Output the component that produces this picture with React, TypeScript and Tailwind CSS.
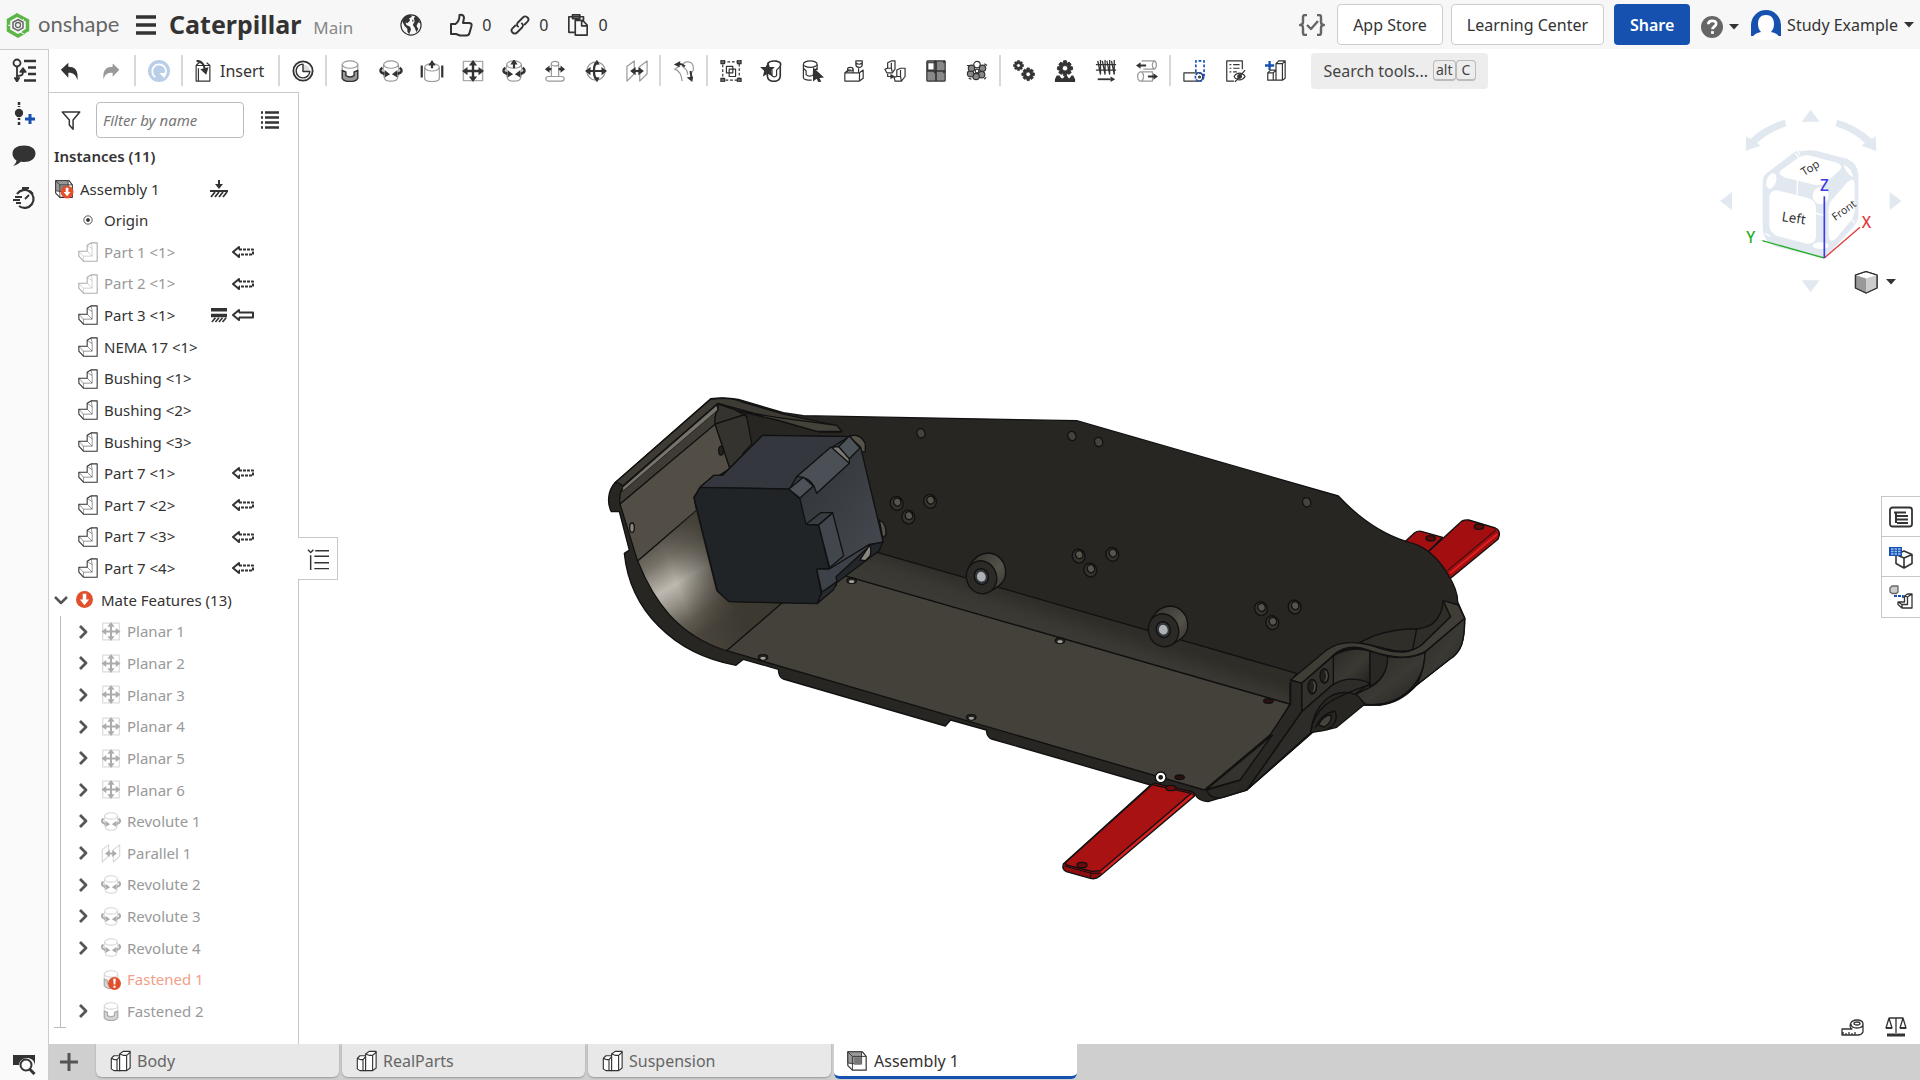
import type { FC, ReactNode } from 'react';

const DARK = '#333';
const GRAY = '#999';

interface IconProps {
    children: ReactNode;
    className?: string;
    box?: string;
}

const Icon: FC<IconProps> = ({ children, className = 'w-6 h-6', box = '0 0 24 24' }) => (
    <svg
        className={`shrink-0 ${className}`}
        viewBox={box}
        fill="none"
        stroke="currentColor"
        strokeWidth="1.3"
        strokeLinejoin="round"
        aria-hidden="true"
    >
        {children}
    </svg>
);

/* ---------- mate icons, shared by toolbar and tree ---------- */

const FastenedGlyph = () => (
    <>
        <path d="M3.500 5v7M20.500 5v7" stroke={GRAY} />
        <path d="M3.500 11.500V20c1 2 4 3.500 8.500 3.500s7.500-1.500 8.500-3.500v-8.500l-4 1.500v4c-2 2-7 2-9 0v-4z" fill={GRAY} stroke={DARK} strokeWidth="1.600" />
        <ellipse cx="12" cy="5" rx="8.500" ry="4" fill="#fff" stroke={GRAY} />
    </>
);

const RevoluteGlyph = () => (
    <>
        <path d="M4 5c-1 5-1 10 1 15 1 4 13 4 14 0 2-5 2-10 1-15" stroke={GRAY} />
        <ellipse cx="12" cy="5" rx="8" ry="4" stroke={GRAY} />
        <path d="M2.500 8.500C-.5 10.500-.5 14 5 15M21.500 8.500C24.500 10.500 24.500 14 19 15" stroke={DARK} strokeWidth="2.600" />
        <path d="M5 11l6 4.500L5 19zM19 11l-6 4.500L19 19z" fill={DARK} stroke="none" />
    </>
);

const PlanarGlyph = () => (
    <>
        <rect x="1.500" y="1.500" width="21" height="21" stroke="#aaa" strokeWidth="1.600" />
        <path d="M12 3v18M3 12h18" stroke={DARK} strokeWidth="2.600" />
        <path d="M12 0l4.500 6h-9zM12 24l4.500-6h-9zM0 12l6-4.500v9zM24 12l-6-4.500v9z" fill={DARK} stroke="none" />
    </>
);

const ParallelGlyph = () => (
    <>
        <path d="M1 23V7l8-6v14zM23 1v14l-8 8V7z" stroke={GRAY} />
        <path d="M7 12h10" stroke={DARK} strokeWidth="2.400" />
        <path d="M4.500 12l6-4.500v9zM19.500 12l-6-4.500v9z" fill={DARK} stroke="none" />
    </>
);

const PartGlyph = () => (
    <>
        <path d="M1 11h10V4l5-3h7v22H6.500L1 17z" fill="#fff" />
        <path d="M1 11l5.500 6H17L11 11M11 4l6 4v9M6.500 17v6M17 8l-1-7" strokeWidth="1" opacity=".6" />
    </>
);

const StudioGlyph = () => (
    <>
        <path d="M1.500 9l3-3h6.500v17H4.500l-3-2z" fill="#fff" />
        <path d="M1.500 9l4 1.500H8V23M8 10.500L11 7" />
        <path d="M11 4l4-3h8v19l-4 3h-8z" fill="#fff" />
        <path d="M11 4l4 1.500h4V23M19 5.500L23 2" />
    </>
);

const AssemblyGlyph = () => (
    <>
        <path d="M2 2h16l4 5v15H7l-5-5z" fill="#fff" />
        <path d="M2 2h15v13H7l-5-1z" fill={GRAY} strokeWidth="1" />
        <path d="M7 22V7h15M2 2l5 5" strokeWidth="1" />
        <path d="M9 8h8v8H9z" fill="#777" stroke="none" />
    </>
);

const ErrorArrow = () => (
    <>
        <circle cx="12" cy="12" r="12" fill="#e0502a" stroke="none" />
        <path d="M9.500 4h5v8h4L12 20l-6.500-8h4z" fill="#fff" stroke="none" />
    </>
);

/* ---------- header ---------- */

const Caret = () => (
    <svg className="w-2.5 h-1.5 shrink-0" viewBox="0 0 10 6" aria-hidden="true">
        <path d="M0 0h10L5 5.500z" fill="#333" />
    </svg>
);

const Counter: FC<{ label: string; children: ReactNode }> = ({ label, children }) => (
    <button aria-label={label} className="flex items-center gap-[9px]">
        {children}
        <span>0</span>
    </button>
);

const Header = () => (
    <header className="flex h-[49px] shrink-0 items-center bg-[#f7f7f7] pl-1.5 pr-1.5 text-base text-[#333]">
        <a href="#" className="flex items-center gap-2 text-[#666]">
            <svg className="h-[26px] w-6" viewBox="0 0 24 26" fill="none" aria-hidden="true">
                <path d="M12 2.500L2.500 8v7" stroke="#5cb647" strokeWidth="3.500" />
                <path d="M2.500 14v4.500L12 24l6-3.500" stroke="#5cb647" strokeWidth="3.500" />
                <path d="M10 2.500l11.500 6V18L17 20.500" stroke="#5cb647" strokeWidth="3.500" />
                <path d="M2 13l5 2M14 20l4 2M18 7l-3 3" stroke="#f7f7f7" strokeWidth="1" />
                <path d="M12 7.500l5 2.800v5.500l-5 2.800-5-2.800v-5.500z" stroke="#666" strokeWidth="1.500" />
                <circle cx="12" cy="13" r="2.500" stroke="#666" strokeWidth="1.300" />
            </svg>
            <span className="w-[84px] pb-0.5 font-[Lato] text-[22px] leading-6">onshape</span>
        </a>
        <button aria-label="Menu" className="ml-3.5">
            <Icon className="h-5 w-5" box="0 0 20 20">
                <path d="M0 2h20M0 10h20M0 18h20" strokeWidth="3.500" />
            </Icon>
        </button>
        <div className="ml-[13px] flex items-baseline gap-3">
            <h1 className="text-[25px] font-bold">Caterpillar</h1>
            <span className="text-[17px] text-[#888]">Main</span>
        </div>
        <button aria-label="Public document" className="ml-[47px]">
            <Icon className="h-[22px] w-[22px]">
                <circle cx="12" cy="12" r="11" />
                <path d="M4 4c3-3 6-3.500 8-3l1 2-3 2 1 2-3 3-2-1 1 3 4 2 1 3-2 5-2-3v-3l-3-3-3-6zM17 2l4 4 1 4-2-1-2 4 2 3-2 4-2-5-2-3 2-4-1-3zM13 6l2 1-1 2z" fill={DARK} stroke="none" />
            </Icon>
        </button>
        <div className="ml-[27px] flex items-center gap-[19px]">
            <Counter label="Likes">
                <Icon>
                    <path d="M2 11h4.500c3-2 4-5 4-9 3-1 4.500 1 4.500 3l-1 5h6c2 0 3 1 2.500 3l-2 7c-.5 2-2 2.500-3 2.500H11L7 21H2z" strokeWidth="2" />
                </Icon>
            </Counter>
            <Counter label="Links">
                <Icon className="h-5 w-5">
                    <path d="M10.500 14.500c-2.500-1.500-2.500-4-1-5.500l6-6c2-2 4-1.500 5.500 0s1.500 3.500 0 5L17 12M13.500 9.500c2.500 1.500 2.500 4 1 5.500l-6 6c-2 2-4 1.500-5.500 0s-1.500-3.500 0-5L7 12" strokeWidth="2.200" />
                </Icon>
            </Counter>
            <Counter label="Copies">
                <Icon className="h-[22px] w-[22px]">
                    <path d="M8 20H2V3h16v4M6 3V1h8v4H6zM9 7h8l5 5v11H9zM16 7v6h6" strokeWidth="1.800" />
                </Icon>
            </Counter>
        </div>
        <div className="ml-auto flex items-center">
            <button aria-label="Versions check" className="mr-3 text-[#666]">
                <Icon className="h-[22px] w-[26px]" box="0 0 26 22">
                    <path d="M8 1H6Q4 1 4 3v5q0 3-3 3 3 0 3 3v5q0 2 2 2h2M18 1h2q2 0 2 2v5q0 3 3 3-3 0-3 3v5q0 2-2 2h-2M8 11l4 4 7-8" strokeWidth="2.400" />
                </Icon>
            </button>
            <button className="h-[41px] rounded-sm border border-[#ccc] bg-white px-[15px]">App Store</button>
            <button className="ml-2 h-[41px] rounded-sm border border-[#ccc] bg-white px-[15px]">Learning Center</button>
            <button className="ml-2.5 h-[41px] w-[76px] rounded-sm bg-[#1651b0] font-semibold text-white">Share</button>
            <button aria-label="Help" className="ml-[11px] flex items-center gap-1.5 pt-1">
                <svg className="h-[22px] w-[22px]" viewBox="0 0 24 24" fill="none" aria-hidden="true">
                    <circle cx="12" cy="12" r="12" fill="#666" />
                    <path d="M8 9c0-5 8.500-5 8.500-.500 0 3-4 3-4 6" stroke="#fff" strokeWidth="3" />
                    <rect x="11" y="16.500" width="3" height="3" fill="#fff" />
                </svg>
                <Caret />
            </button>
            <button className="ml-3 flex items-center">
                <svg className="mr-1.5 h-[30px] w-[30px]" viewBox="0 0 30 30" aria-hidden="true">
                    <path d="M0 26V15a15 15 0 0130 0v11z" fill="#1651b0" />
                    <path d="M15 5c5 0 8 3 8 9 0 3-1 6-3 8 4 1 7 2 8 5-2 2-8 3-13 3S4 29 2 27c1-3 4-4 8-5-2-2-3-5-3-8 0-6 3-9 8-9z" fill="#fff" />
                </svg>
                <span className="mr-1.5">Study Example</span>
                <Caret />
            </button>
        </div>
    </header>
);

/* ---------- left rail ---------- */

const Rail = () => (
    <nav className="flex w-[49px] shrink-0 flex-col items-center border-r border-t border-[#ccc] bg-[#fafafa] text-[#333]">
        <button aria-label="Versions and history" className="mt-2">
            <Icon>
                <circle cx="5" cy="5" r="3.500" strokeWidth="1.800" />
                <path d="M5 9v13M5 18c6 0 6-2 6-5" strokeWidth="1.800" />
                <path d="M5 24l-2.500-4h5zM11 10l-3 4h6z" fill={DARK} />
                <path d="M12 3h12M16 9.500h8M16 16h8M12 22.500h12" strokeWidth="2.500" />
            </Icon>
        </button>
        <button aria-label="Create version" className="mt-5">
            <Icon>
                <path d="M7 0v3M7 4v1M7 16v2M7 20v3" strokeWidth="2.500" />
                <circle cx="7" cy="11" r="3.500" fill={DARK} />
                <path d="M18 12v10M13 17h10" stroke="#1651b0" strokeWidth="3" />
            </Icon>
        </button>
        <button aria-label="Comments" className="mt-[18px]">
            <Icon>
                <path d="M12 1.500c7 0 11.500 3 11.500 8s-5 8.500-11.500 8.500c-1 0-2 0-3-.5-2 2-5 4-8 4.500 2-2 3-3 3.500-5.500C2 15 .5 12.500.5 9.500c0-5 4.500-8 11.500-8z" fill={DARK} stroke="none" />
            </Icon>
        </button>
        <button aria-label="Performance" className="mt-[18px]">
            <Icon>
                <path d="M5 8a9 9 0 112 12" strokeWidth="2.200" />
                <path d="M10 2h7M13.500 2v3M18 5l3 3M13 13l4-4M3 11h7M1 14h7M4 17h5" strokeWidth="1.800" />
            </Icon>
        </button>
        <button aria-label="Search document" className="mb-[5px] mt-auto">
            <Icon>
                <path d="M1 4h22v10c-1-5-4-7-8-7s-8 3-8 7H1z" fill={DARK} stroke="none" />
                <circle cx="14" cy="14" r="5.500" strokeWidth="2" />
                <path d="M17.500 18l5 5" strokeWidth="3" />
            </Icon>
        </button>
    </nav>
);

/* ---------- toolbar ---------- */

const Sep = () => <span className="mx-0.5 h-[31px] w-0.5 shrink-0 bg-[#d8d8d8]" />;

const Tool: FC<{ label: string; children: ReactNode }> = ({ label, children }) => (
    <button aria-label={label} className="flex w-[41px] shrink-0 justify-center">
        <Icon className="h-[22px] w-6">{children}</Icon>
    </button>
);

const GEAR = 'M10 1h4l1 4 3-2 3 3-2 3 4 1v4l-4 1 2 3-3 3-3-2-1 4h-4l-1-4-3 2-3-3 2-3-4-1v-4l4-1-2-3 3-3 3 2zM12 8a4 4 0 100 8 4 4 0 000-8z';

const Toolbar = () => (
    <div role="toolbar" className="flex h-[43px] shrink-0 items-center text-base text-[#333]">
        <button aria-label="Undo" className="flex w-[41px] shrink-0 justify-center">
            <Icon className="h-5 w-5">
                <path d="M10 2v5c9 0 12 5 11 16-2-6-4-9-11-9v6L1 10.500z" fill={DARK} stroke="none" />
            </Icon>
        </button>
        <button aria-label="Redo" className="flex w-[42px] shrink-0 justify-center">
            <Icon className="h-5 w-5">
                <path d="M14 3v4C5 7 2 12 3 22c2-6 4-8 11-8v5l8-8.500z" fill={GRAY} stroke="none" />
            </Icon>
        </button>
        <Sep />
        <Tool label="Update">
            <circle cx="12" cy="12" r="12" fill="#b9cee8" stroke="none" />
            <path d="M8 18.500A7.500 7.500 0 1117 18" stroke="#fff" strokeWidth="2" />
            <path d="M12.500 14.500l7-.500-1.500 6z" fill="#fff" stroke="none" />
        </Tool>
        <Sep />
        <button className="flex shrink-0 items-center gap-2 pl-[9px] pr-3">
            <Icon className="h-[22px] w-[18px]" box="0 0 18 24">
                <path d="M1.500 6h15v17H1.500zM1.500 6l3-3h4M16.500 6L13 3M4 9v14" />
                <path d="M2 1c5 0 8 3 9 9" strokeWidth="2.200" />
                <path d="M6 10l9-2-2.500 8z" fill={DARK} stroke="none" />
            </Icon>
            Insert
        </button>
        <Sep />
        <Tool label="Animate">
            <circle cx="12" cy="12" r="10.500" strokeWidth="2" />
            <path d="M13 5v7h6.500c-.5-4-2.500-6.500-6.500-7z" fill="#ddd" stroke="none" />
            <path d="M12 4.500a7.500 7.500 0 107.500 8H12z" strokeWidth="1.600" />
        </Tool>
        <Sep />
        <Tool label="Fastened mate"><FastenedGlyph /></Tool>
        <Tool label="Revolute mate"><RevoluteGlyph /></Tool>
        <Tool label="Slider mate">
            <path d="M4 8v12c0 2 3 3.500 8 3.500s8-1.500 8-3.500V8" stroke={GRAY} />
            <ellipse cx="12" cy="8" rx="8" ry="4" stroke={GRAY} />
            <path d="M.8 6v13M23.200 6v13M12 3v6" stroke={DARK} strokeWidth="2.400" />
            <path d="M12 0l4 6H8z" fill={DARK} stroke="none" />
        </Tool>
        <Tool label="Planar mate"><PlanarGlyph /></Tool>
        <Tool label="Cylindrical mate">
            <RevoluteGlyph />
            <path d="M12 3v6" strokeWidth="2.400" />
            <path d="M12-1l4 6H8z" fill={DARK} stroke="none" />
        </Tool>
        <Tool label="Pin slot mate">
            <ellipse cx="12" cy="4" rx="4" ry="2.500" stroke={GRAY} />
            <path d="M8 4v14M16 4v14M5 18h14c4 0 4 5 0 5H5c-4 0-4-5 0-5z" stroke={GRAY} />
            <path d="M3 10h5M16 10h5" strokeWidth="2.400" />
            <path d="M1 10l5-4v8zM23 10l-5-4v8z" fill={DARK} stroke="none" />
        </Tool>
        <Tool label="Ball mate">
            <circle cx="12" cy="12" r="10" stroke={GRAY} />
            <path d="M12 3c-3 4-3 14 0 18M3 12h18" strokeWidth="2.400" />
            <path d="M13-.500l3 5.500-6 .500zM13 24.500l3-5.500-6-.500zM0 12l6-4.500v9zM24 12l-6-4.500v9z" fill={DARK} stroke="none" />
        </Tool>
        <Tool label="Parallel mate"><ParallelGlyph /></Tool>
        <Sep />
        <Tool label="Tangent mate">
            <path d="M10 7c2-7 11-6 12 0 1 4-1 7-4 8M8 6L2 10c3 1 7 4 8 13M10 7c4 2 6 5 6 9" stroke={GRAY} />
            <path d="M6 4c3 0 5 1 7 3M19 12c1 3 1 5 1 8" strokeWidth="2.200" />
            <path d="M1 5l7-4-1 7zM21 24l-6-5 7-1z" fill={DARK} stroke="none" />
        </Tool>
        <Sep />
        <Tool label="Group">
            <path d="M3 2h18v20H3z" strokeDasharray="3 2" />
            <path d="M7 7h7v7H7zM10 10h7v8h-7z" />
            <path d="M1 0h4v4H1zM19 0h4v4h-4zM1 20h4v4H1zM19 20h4v4h-4z" fill="#666" stroke={DARK} />
        </Tool>
        <Tool label="Mate connector">
            <path d="M7 8v10c1 7 13 7 14 0V6M21 6c3-5-10-7-14-2" strokeWidth="1.800" />
            <path d="M12 11v6c1 2 4 2 5 0v-6l4-4" />
            <path d="M8 2l1.500 5.500H15L11 12l1.500 6L7.500 15 2 18l1.500-6L-1 7.500h6z" fill={DARK} stroke="none" />
        </Tool>
        <Tool label="Select part">
            <ellipse cx="9" cy="4.500" rx="7.500" ry="3.500" />
            <path d="M1.500 5v14c0 2 4 3 9 3M16.500 5v6M1.500 9l3 3v4c2 2 6 2 8 0v-4l4-3" />
            <path d="M12 8l12 11-5 .500 2 4-3 1-2-4-4 3z" fill={DARK} stroke="none" />
        </Tool>
        <Tool label="Replicate">
            <path d="M2 14h16l4-3v9l-4 3H2zM2 14l4-3h3M18 14v9" />
            <ellipse cx="8" cy="10" rx="3" ry="2" />
            <path d="M5 10v3M11 10v4M17 9v5M14 1h7v4c0 4-7 4-7 0zM14 3c2 2 5 2 7 0" />
        </Tool>
        <Tool label="Copy parts">
            <path d="M1 10l3-1V3l4-2h4v9l-3 4H3zM11 19l3-1v-7l4-2h5v9l-4 5h-7z" fill="#fff" />
            <path d="M4 9h4V3M8 9l1 4M14 18h4v-7M18 18l1 5M4 15v3h5" />
            <path d="M7 15l5 3-5 3z" fill={DARK} stroke="none" />
        </Tool>
        <Tool label="Linear pattern">
            <rect x="2" y="1" width="20" height="22" rx="1" fill="#888" />
            <path d="M3 3h7v8H3z" fill="#fff" />
            <path d="M12 1v22M2 12h20M10 3l2-2M10 14l2-2M20 3l2-2M20 14l2-2" strokeWidth="1.800" />
        </Tool>
        <Tool label="Circular pattern">
            <g fill="#888">
                <circle cx="12" cy="5" r="3.500" fill="#fff" />
                <circle cx="18" cy="9" r="3.500" />
                <circle cx="17" cy="16" r="3.500" />
                <circle cx="11" cy="18" r="3.500" />
                <circle cx="5" cy="15" r="3.500" />
                <circle cx="6" cy="9" r="3.500" />
            </g>
            <circle cx="12" cy="12" r="2" />
            <path d="M1 6h3M20 4l3 2M20 21l2-2M3 20l3 1" />
        </Tool>
        <Sep />
        <Tool label="Gear relation">
            <path d={GEAR} fill={DARK} fillRule="evenodd" stroke={DARK} transform="translate(0 0) scale(.5)" />
            <path d={GEAR} fill={DARK} fillRule="evenodd" stroke={DARK} transform="translate(9 8) scale(.63)" />
        </Tool>
        <Tool label="Rack and pinion relation">
            <path d={GEAR} fill={DARK} fillRule="evenodd" stroke={DARK} transform="translate(3 0) scale(.75)" />
            <path d="M1 24v-3l2-4h3l2 3h2l2-3h2l2 3h1l2-3h2l2 4v3z" fill={DARK} stroke="none" />
        </Tool>
        <Tool label="Screw relation">
            <path d="M3 1l3 15M8 1l3 15M13 1l3 15M18 1l3 15M6 0v15M11 0v15M16 0v15M21 0v15M1 5h22M1 11h22" strokeWidth="1.400" />
            <path d="M3 21h14" strokeWidth="2" />
            <path d="M22 21l-5-3v6z" fill={DARK} stroke="none" />
        </Tool>
        <Tool label="Linear relation">
            <path d="M6 1h14c3 1 3 8 0 9H8M20 1c-3 2-3 7 0 9M4 13h14v10H4c-3-2-3-8 0-10M6 13c3 2 3 8 0 10" stroke={GRAY} />
            <path d="M3 6h8M13 18h8" strokeWidth="2" />
            <path d="M0 6l5-3.500v7zM24 18l-5-3.500v7z" fill={DARK} stroke="none" />
        </Tool>
        <Sep />
        <Tool label="Section in context">
            <path d="M14 13V1h9v18" stroke="#1651b0" strokeDasharray="3 2" strokeWidth="1.800" />
            <path d="M1 14h16c6 0 6 9 0 9H1z" />
            <circle cx="18" cy="18.500" r="4.500" stroke="#1651b0" strokeDasharray="3 1" strokeWidth="1.800" />
            <circle cx="18" cy="18.500" r="1" />
        </Tool>
        <Tool label="Configurations">
            <path d="M20 10V1H3v22h8" />
            <path d="M6 5h2M10 5h7M6 9h2M10 9h7M6 13h2M10 13h4" />
            <path d="M11 18c3-5 9-5 12 0-3 5-9 5-12 0zM23 11L12 24" />
            <circle cx="17" cy="18" r="2" fill={DARK} />
        </Tool>
        <Tool label="Create part studio in context">
            <path d="M3 14l3-3h6v11H3zM3 14h6v8M9 14l3-3M12 4l3-3h7v19l-3 2h-7zM12 4h7v18M19 4l3-3" />
            <path d="M5 1v10M0 6h10" stroke="#1651b0" strokeWidth="2.500" />
        </Tool>
        <button className="ml-[15px] flex h-9 shrink-0 items-center rounded-sm bg-[#ededed] px-3 text-[#444]">
            <span className="mr-[5px]">Search tools...</span>
            <kbd className="rounded-sm border border-b-2 border-[#bbb] px-0.5 font-[inherit] text-sm leading-[18px]">alt</kbd>
            <kbd className="rounded-sm border border-b-2 border-[#bbb] px-[5px] font-[inherit] text-sm leading-[18px]">C</kbd>
        </button>
    </div>
);

/* ---------- feature tree ---------- */

type Freedom = 'dashed' | 'solid';

interface Part {
    name: string;
    hidden?: boolean;
    freedom?: Freedom;
}

const parts: Part[] = [
    { name: 'Part 1 <1>', hidden: true, freedom: 'dashed' },
    { name: 'Part 2 <1>', hidden: true, freedom: 'dashed' },
    { name: 'Part 3 <1>', freedom: 'solid' },
    { name: 'NEMA 17 <1>' },
    { name: 'Bushing <1>' },
    { name: 'Bushing <2>' },
    { name: 'Bushing <3>' },
    { name: 'Part 7 <1>', freedom: 'dashed' },
    { name: 'Part 7 <2>', freedom: 'dashed' },
    { name: 'Part 7 <3>', freedom: 'dashed' },
    { name: 'Part 7 <4>', freedom: 'dashed' },
];

const mates = [
    'Planar 1', 'Planar 2', 'Planar 3', 'Planar 4', 'Planar 5', 'Planar 6',
    'Revolute 1', 'Parallel 1', 'Revolute 2', 'Revolute 3', 'Revolute 4',
    'Fastened 1', 'Fastened 2',
];

const MateGlyph: FC<{ name: string }> = ({ name }) => {
    if (name.startsWith('Planar')) return <PlanarGlyph />;
    if (name.startsWith('Revolute')) return <RevoluteGlyph />;
    if (name.startsWith('Parallel')) return <ParallelGlyph />;
    return <FastenedGlyph />;
};

const FreedomArrow: FC<{ kind: Freedom }> = ({ kind }) => (
    <Icon className="h-3 w-[22px]" box="0 0 22 12">
        <path d="M7 3.500V1L1 6l6 5V8.500" strokeWidth="2" />
        <path d="M7 3.500h14v5H7" strokeWidth="2" strokeDasharray={kind === 'dashed' ? '3 1' : undefined} />
    </Icon>
);

const Hatch = () => <path d="M1 17l4-5M5 17l4-5M9 17l4-5M13 17l4-5" strokeWidth="1.800" />;

const FeatureTree = () => (
    <aside className="relative flex w-[250px] shrink-0 flex-col border-r border-t border-[#c8c8c8] bg-white text-[15px] text-[#333]">
        <div className="flex shrink-0 items-center pl-3 pt-[9px]">
            <Icon className="h-5 w-5">
                <path d="M1.500 2.500h21L14.500 12v11L10 18v-6z" strokeWidth="1.800" />
            </Icon>
            <input
                type="text"
                aria-label="Filter by name"
                placeholder="Filter by name"
                className="ml-[15px] h-9 w-[148px] rounded-sm border border-[#bbb] px-1.5 italic placeholder:text-[#777]"
            />
            <button aria-label="List options" className="ml-[17px]">
                <Icon className="h-[18px] w-[18px]" box="0 0 18 18">
                    <path d="M0 1.500h2M4 1.500h14M0 6.500h2M4 6.500h14M0 11.500h2M4 11.500h14M0 16.500h2M4 16.500h14" strokeWidth="2.400" />
                </Icon>
            </button>
        </div>
        <h2 className="mt-[7px] h-7 shrink-0 pl-[5px] font-semibold">Instances (11)</h2>
        <ul className="relative grid min-h-0 flex-1 auto-rows-fr">
            <li className="flex items-center pl-[5px]">
                <Icon className="h-5 w-5">
                    <AssemblyGlyph />
                    <g transform="translate(8 8) scale(.64)"><ErrorArrow /></g>
                </Icon>
                <span className="ml-1.5">Assembly 1</span>
                <Icon className="ml-[50px] h-[18px] w-[18px]" box="0 0 18 18">
                    <path d="M9 0v5M0 11h18" strokeWidth="2" />
                    <path d="M9 9L5 4h8z" fill={DARK} stroke="none" />
                    <Hatch />
                </Icon>
            </li>
            <li className="flex items-center pl-[34px]">
                <Icon className="h-2.5 w-2.5">
                    <circle cx="12" cy="12" r="10" strokeWidth="2" />
                    <circle cx="12" cy="12" r="4" fill={DARK} />
                </Icon>
                <span className="ml-[11px]">Origin</span>
            </li>
            {parts.map((part) => (
                <li key={part.name} className="flex items-center pl-[29px] pr-11">
                    <Icon className={part.hidden ? 'h-5 w-5 opacity-40' : 'h-5 w-5'}><PartGlyph /></Icon>
                    <span className={part.hidden ? 'ml-1.5 mr-auto text-[#999]' : 'ml-1.5 mr-auto'}>{part.name}</span>
                    {part.freedom === 'solid' && (
                        <Icon className="mr-[5px] h-4 w-4" box="0 0 18 18">
                            <path d="M0 3h18M0 9.500h18" strokeWidth="4" />
                            <Hatch />
                        </Icon>
                    )}
                    {part.freedom && <FreedomArrow kind={part.freedom} />}
                </li>
            ))}
            <li className="flex items-center pl-[5px]">
                <button aria-label="Collapse mate features">
                    <Icon className="h-3.5 w-3.5" box="0 0 14 14">
                        <path d="M1 4l6 6 6-6" stroke="#555" strokeWidth="2.500" />
                    </Icon>
                </button>
                <Icon className="ml-2 h-[17px] w-[17px]"><ErrorArrow /></Icon>
                <span className="ml-2">Mate Features (13)</span>
            </li>
            {mates.map((name) => {
                const broken = name === 'Fastened 1';
                return (
                    <li key={name} className="ml-[11px] flex items-center border-l border-[#bbb] pl-4">
                        <button aria-label={`Expand ${name}`} className={broken ? 'invisible' : ''}>
                            <Icon className="h-3.5 w-3" box="0 0 12 14">
                                <path d="M3 1l6 6-6 6" stroke="#555" strokeWidth="2.800" />
                            </Icon>
                        </button>
                        <span className="relative ml-3 flex">
                            <Icon className="h-[19px] w-5 opacity-40"><MateGlyph name={name} /></Icon>
                            {broken && (
                                <span className="absolute -bottom-px right-0">
                                    <Icon className="h-[13px] w-[13px]">
                                        <circle cx="12" cy="12" r="12" fill="#e0502a" stroke="none" />
                                        <path d="M9.500 3h5l-1 11h-3zM10 16h4v4h-4z" fill="#fff" stroke="none" />
                                    </Icon>
                                </span>
                            )}
                        </span>
                        <span className={broken ? 'ml-1.5 text-[#f2a08a]' : 'ml-1.5 text-[#999]'}>{name}</span>
                    </li>
                );
            })}
        </ul>
        <div className="mb-4 ml-[5px] w-3 shrink-0 border-t border-[#bbb]" />
        <button
            aria-label="Toggle tree panel"
            className="absolute left-full top-[444px] z-10 flex h-[43px] w-10 items-center justify-center border border-l-0 border-[#c8c8c8] bg-white"
        >
            <Icon className="h-[22px] w-[22px]">
                <path d="M1 2l3 3 3-3M9 3h15M4 8v16M8 9h16M8 16h16M8 22.500h16" strokeWidth="1.600" />
            </Icon>
        </button>
    </aside>
);

/* ---------- 3D viewport ---------- */

const smallHoles = [
    [993, 160], [1446, 168], [1526, 186], [2150, 367],
];

const screwHoles = [
    [920, 370], [955, 411], [1020, 364],
    [1466, 528], [1501, 570], [1567, 523],
    [2013, 686], [2047, 728], [2114, 681],
];

const floorHoles = [
    [519, 832], [785, 602], [1144, 1012], [1410, 782],
];

const Bushing: FC<{ x: number; y: number }> = ({ x, y }) => (
    <g transform={`translate(${x} ${y})`}>
        <path d="M-36-32Q-15-70 20-71C50-70 75-45 73-8 70 20 50 30 30 42z" fill="url(#bushing)" />
        <ellipse cx="0" cy="2" rx="45" ry="50" fill="#2b2a27" transform="rotate(-20)" />
        <ellipse rx="21" ry="24" fill="#33373d" transform="rotate(-20)" />
        <ellipse rx="13" ry="15" fill="#b0b1b3" stroke="none" transform="rotate(-20)" />
    </g>
);

const Model = () => (
    <svg className="block h-full w-full" viewBox="299 92 1621 952" role="img" aria-label="Caterpillar assembly">
        <defs>
            <linearGradient id="curve" gradientUnits="userSpaceOnUse" x1="180" y1="490" x2="340" y2="760">
                <stop offset="0" stopColor="#56524a" />
                <stop offset=".2" stopColor="#777268" />
                <stop offset=".46" stopColor="#bdb9b0" />
                <stop offset=".62" stopColor="#99948a" />
                <stop offset=".82" stopColor="#645f55" />
                <stop offset="1" stopColor="#4a463d" />
            </linearGradient>
            <linearGradient id="curveShade" gradientUnits="userSpaceOnUse" x1="265" y1="620" x2="400" y2="570">
                <stop offset="0" stopColor="#3a372f" stopOpacity="0" />
                <stop offset="1" stopColor="#3a372f" stopOpacity=".85" />
            </linearGradient>
            <linearGradient id="side" gradientUnits="userSpaceOnUse" x1="640" y1="300" x2="860" y2="450">
                <stop offset="0" stopColor="#32373c" />
                <stop offset="1" stopColor="#42464c" />
            </linearGradient>
            <linearGradient id="band" gradientUnits="userSpaceOnUse" x1="1400" y1="680" x2="1370" y2="770">
                <stop offset="0" stopColor="#2e2d28" />
                <stop offset=".6" stopColor="#3a3832" />
                <stop offset="1" stopColor="#3b3a34" />
            </linearGradient>
            <linearGradient id="bushing" x1="0" y1="0" x2="1" y2="1">
                <stop offset="0" stopColor="#33312c" />
                <stop offset=".6" stopColor="#55524a" />
                <stop offset="1" stopColor="#33312c" />
            </linearGradient>
            <linearGradient id="fender" x1="0" y1="0" x2="1" y2="1">
                <stop offset="0" stopColor="#2b2a26" />
                <stop offset=".55" stopColor="#3b3933" />
                <stop offset="1" stopColor="#22211e" />
            </linearGradient>
        </defs>
        {/* drawn at 3x, shapes are in model-local units */}
        <g transform="translate(590 380) scale(.33333)" stroke="#111" strokeWidth="4" strokeLinejoin="round">
            {/* rear links */}
            <path d="M2440 490l34-32q8-6 20-4l64 18-50 50z" fill="#a30f10" />
            <path d="M2512 518l98-90q8-10 26-8l80 24q14 6 12 22l-4 12-144 118z" fill="#a30f10" />
            <path d="M2580 580l142-118" fill="none" stroke="#dd2020" strokeWidth="6" />
            <path d="M2572 572l146-122" fill="none" strokeWidth="3" />
            <ellipse cx="2522" cy="475" rx="14" ry="8" fill="#5c0a0a" />
            <ellipse cx="2667" cy="440" rx="14" ry="8" fill="#5c0a0a" />

            {/* body silhouette */}
            <path
                d="M362 56Q405 50 445 58L580 98l60 9 820 15 785 226Q2340 450 2450 485q75 15 125 100 28 45 28 80l21 48q0 80-44 122l-100 80q-50 55-110 60h-70l-60 55q-20 22-65 20L1970 1230l-116 35q-28-2-38-20l-10-10-124-20-477-138q-14-4-16-27l-107-30-16 18-486-141q-14-3-15-29l-105-30-22 18C250 822 120 690 103 520l15-10L88 395H64c-14-25-10-65 11-87z"
                fill="#272622"
            />

            {/* left plane and rim */}
            <path d="M90 372L375 130l45 135-90 60-18 27 8 40-177 152z" fill="#524e46" />
            <path d="M90 372q-4-28 8-50L380 82l-4 50z" fill="#3f3c35" />
            <path d="M98 322L380 76l4 14L98 334z" fill="#77736a" strokeWidth="2" />
            <path d="M75 308L362 58q60-8 95 8l130 38 150 32 18 20H690l-240-68-66-18-286 248q-8-10-23-10z" fill="#3d3b34" />
            <path d="M384 72v18q-12 15-9 42l45 135 66-72-16-86-40-22z" fill="#35332d" />
            <path d="M375 132l95-30" fill="none" />
            <path d="M440 92l120 20 180 24 16 18H680l-120-34z" fill="#45423a" />

            {/* lit curved corner */}
            <path d="M143 543l177-152 60 240 38 33 157 6-165 142C260 765 190 660 143 543z" fill="url(#curve)" />
            <path d="M143 543l177-152 60 240 38 33 157 6-165 142C260 765 190 660 143 543z" fill="url(#curveShade)" stroke="none" />

            {/* floor and band */}
            <path d="M410 812l165-142 185-85 1340 387-54 88-203 170z" fill="#44413a" />
            <path d="M862 517l1258 363-20 30v62L740 580z" fill="url(#band)" />
            {floorHoles.map(([x, y]) => (
                <g key={`${x}-${y}`}>
                    <ellipse cx={x} cy={y} rx="14" ry="8" fill="#2a2823" />
                    <ellipse cx={x} cy={y + 3} rx="8" ry="4" fill="#a9a8a4" stroke="none" />
                </g>
            ))}
            <ellipse cx="2035" cy="963" rx="14" ry="7" fill="#2c1010" />
            <ellipse cx="1769" cy="1192" rx="14" ry="7" fill="#2c1010" />
            <ellipse cx="393" cy="212" rx="7" ry="13" fill="#25231f" />
            <ellipse cx="126" cy="443" rx="7" ry="14" fill="#8a877e" />

            {smallHoles.map(([x, y]) => (
                <ellipse key={`${x}-${y}`} cx={x} cy={y} rx="12" ry="14" fill="#45433c" transform={`rotate(-20 ${x} ${y})`} />
            ))}
            {screwHoles.map(([x, y]) => (
                <g key={`${x}-${y}`}>
                    <ellipse cx={x} cy={y} rx="19" ry="21" fill="#35332e" transform={`rotate(-20 ${x} ${y})`} />
                    <ellipse cx={x + 3} cy={y - 3} rx="11" ry="12" fill="#57544c" transform={`rotate(-20 ${x} ${y})`} />
                </g>
            ))}

            {/* motor */}
            <path d="M780 168q30-10 46 22v24l-20 4z" fill="#57534a" />
            <path d="M868 420q22 10 20 45l-10 8z" fill="#57534a" />
            <path d="M458 222l25-28h14l-10 22z" fill="#77736a" />
            <path d="M330 322l42-36h26l120-120 260 4 34 32 67 282-80 70-60 50v12l-56 54-265-6-35-32-70-280z" fill="url(#side)" />
            <path d="M330 322l42-36h26l120-120 260 4-56 34-102 86-22 38z" fill="#34383e" />
            <path d="M620 290l102-88 24 0 32 36v12l-98 90-8-22q-15-28-52-28z" fill="#4b5056" />
            <path d="M596 328l44-36 30 26-40 36z" fill="#4d5258" />
            <path d="M724 202l22-2 32 36v14z" fill="#7a7770" />
            <path d="M746 200l32-32 32 36-32 32z" fill="#4c5359" />
            <path d="M330 322l266 5 34 30 18 76 38 2 32 130-38 4 14 70-12 32-265-6-35-32-70-280z" fill="#202427" />
            <path d="M648 433l44-35h36l-42 36z" fill="#383d43" />
            <path d="M686 435l42-36 33 128-42 36z" fill="#42474d" />
            <path d="M680 567h38l120-74 42-6-80 64-58 48-2 8-44 32z" fill="#3d4249" />
            <path d="M738 590l105-96 36-8-12 26-125 95z" fill="#23272b" />
            <path d="M810 540l28-44q8 12 2 32l-14 14z" fill="#8a877e" />
            <path d="M682 670l14-34 46-32-12 26z" fill="#272b30" />

            <Bushing x={1174} y={590} />
            <Bushing x={1720} y={749} />

            {/* right end fender */}
            <g transform="translate(1410 60)">
                <path d="M900 728q70-42 170-41 72-5 80-85l22 48-87 85q-35 25-85 16z" fill="#2f2e29" />
                <path d="M1070 687l-12 60" fill="none" />
                <path d="M725 850l85-75q50-45 120-23 95 30 165 3l119-100c0 70-10 100-44 122l-100 78q-50 50-110 60h-70l-62 55-62 20-206 180 165-235z" fill="#2a2925" />
                <path d="M820 768q50-32 110-15v97q-60-20-110 3z" fill="url(#fender)" />
                <path d="M930 753l53 16q5 60-53 90z" fill="#292824" />
                <path d="M983 769q60 12 112-12c0 100-85 170-185 155l-25-30c60-20 100-50 98-113z" fill="url(#fender)" />
                <path d="M1095 757l119-102c0 70-10 100-44 122l-100 78q25-50 25-98z" fill="url(#fender)" />
                <path d="M692 840l108-90c50-35 110-22 160-5 60 18 90 15 125-10l87-85-22-48 45 13 19 40-119 100c-45 25-100 20-165-3-50-18-85-14-120 23l-85 75z" fill="#3f3d36" />
                <path d="M725 850l95-82v85l-95 82z" fill="#33312c" />
                <ellipse cx="757" cy="860" rx="13" ry="22" fill="#22211d" />
                <ellipse cx="793" cy="828" rx="13" ry="22" fill="#22211d" />
                <path d="M760 845q10 14 0 30M796 813q10 14 0 30" fill="none" stroke="#55524a" />
                <path d="M725 935l95-82q50-30 110-3l-45 33C800 890 775 925 752 998L560 1170z" fill="#2d2c28" />
                <path d="M752 998c8-80 60-140 138-114l25 28-85 70-40 10z" fill="#272622" />
                <path d="M752 998c10-70 45-100 180-145M765 985q20-45 60-52 14 35-25 57" fill="none" />
                <path d="M775 975q15-30 38-30 5 20-20 36z" fill="#45433c" />
                <path d="M692 840l33 10v85l-165 235-70 22q-40 8-50-22l100-30 152-228z" fill="#292824" />
                <path d="M637 1005l-97 135-100 28z" fill="#35332d" />
            </g>

            {/* front link */}
            <path d="M1420 1452l262-237q8-6 18-4l104 24q10 4 9 14l-284 240q-12 10-28 6l-72-20q-14-6-9-23z" fill="#8f0e0f" />
            <path d="M1428 1446l258-232 118 26-272 232-26 2-72-18q-10-2-6-10z" fill="#a81213" />
            <path d="M1534 1478l272-232" fill="none" stroke="#d92222" strokeWidth="7" />
            <path d="M1424 1458l80 22h26M1502 1476v18" fill="none" strokeWidth="3" />
            <ellipse cx="1743" cy="1224" rx="15" ry="8" fill="#6d0b0b" />
            <ellipse cx="1476" cy="1455" rx="15" ry="8" fill="#6d0b0b" />
            <circle cx="1712" cy="1192" r="16" fill="#fff" />
            <circle cx="1712" cy="1192" r="5" fill="#222" />
        </g>
    </svg>
);

const ViewCube = () => (
    <svg className="h-[190px] w-[200px]" viewBox="0 0 600 570" aria-label="View cube" role="img">
        <g transform="translate(-30 -10)">
            <g fill="#e1e8ef">
                <path d="M332 30l27 36h-54zM332 578l27-36h-54zM60 304l36-27v54zM605 304l-36-27v54z" />
                <path d="M255 60l4 20q-55 18-88 50l10 8-44 16 2-44 12 8q45-42 104-58z" />
                <path d="M411 60l-4 20q55 18 88 50l-10 8 44 16-2-44-12 8q-45-42-104-58z" />
                <path d="M188 245q0-18 20-30l75-58q10-6 25-2 15-6 40-2l95 25q30 15 32 45v120q0 20-12 35l-80 88q-10 10-35 5l-120-30q-40-15-40-60z" />
            </g>
            <g fill="#fff">
                <path d="M290 178q12-10 32-12l85 22q26 10 12 24l-42 38q-10 8-30 6l-90-22q-30-12-12-24z" />
                <path d="M208 292q2-22 24-20l90 22q26 6 26 34v80q0 25-28 24l-85-22q-26-8-27-34z" />
                <path d="M386 330q0-20 14-34l42-48q20-18 22 5v80q0 15-10 28l-45 55q-22 18-23-10z" />
                <ellipse cx="214" cy="244" rx="14" ry="24" transform="rotate(20 214 244)" />
                <ellipse cx="362" cy="288" rx="24" ry="26" />
                <ellipse cx="362" cy="438" rx="24" ry="10" />
                <path d="M430 195q25 10 30 38-20-10-30-38z" />
            </g>
            <path d="M292 240v45M285 160l12 14M345 340l28 8M195 402l16 8M455 360l10 10M290 150l10 14" stroke="#fff" strokeWidth="4" />
            <path d="M187 423l186 52" stroke="#27ae2b" strokeWidth="4" />
            <path d="M373 475l107-92" stroke="#e23b3b" strokeWidth="4" />
            <path d="M373 475V290" stroke="#3b3bea" strokeWidth="5" />
            <g fontSize="40" fill="#333">
                <text x="244" y="364" transform="rotate(8 244 364)">Left</text>
                <text x="406" y="364" fontSize="32" transform="rotate(-36 406 364)">Front</text>
                <text x="312" y="230" fontSize="34" transform="rotate(-32 312 230)">Top</text>
            </g>
            <g fontSize="46" fontWeight="500">
                <text x="139" y="430" fill="#27ae2b">Y</text>
                <text x="485" y="385" fill="#e23b3b">X</text>
                <text x="360" y="275" fill="#3b3bea">Z</text>
            </g>
        </g>
    </svg>
);

const SIDE_BTN = 'flex h-10 w-[38px] items-center justify-center';

const Viewport = () => (
    <main className="relative min-w-0 flex-1 bg-white text-[#333]">
        <div className="absolute inset-0">
            <Model />
        </div>
        <div className="absolute right-2.5 top-[11px]">
            <ViewCube />
        </div>
        <button aria-label="View options" className="absolute right-6 top-[178px] flex items-center gap-2">
            <Icon>
                <path d="M12 1.500L23 5v13l-11 5L1.500 18V5z" fill="#fff" />
                <path d="M1.500 5L12 8.500V23L1.500 18z" fill="#999" stroke="none" />
                <path d="M23 5L12 8.500V23l11-5z" fill="#ccc" stroke="none" />
                <path d="M12 1.500L23 5v13l-11 5L1.500 18V5z" />
            </Icon>
            <Caret />
        </button>
        <div className="absolute right-0 top-[404px] divide-y divide-[#c8c8c8] border border-r-0 border-[#c8c8c8] bg-white">
            <button aria-label="Bill of materials" className={SIDE_BTN}>
                <Icon>
                    <rect x="1" y="2.500" width="22" height="19" rx="2.500" strokeWidth="1.800" />
                    <path d="M5 7.500h12M8 11h11M8 14.500h11M8 18h11M7 7v11" strokeWidth="2" />
                </Icon>
            </button>
            <button aria-label="Display states" className={SIDE_BTN}>
                <Icon>
                    <path d="M15 6l8 3.500v9L15 23l-8-4.500v-9zM7 9.500l8 3.500 8-3.500M15 13v10" strokeWidth="1.600" />
                    <rect x="0" y="2" width="13" height="9" fill="#1651b0" stroke="none" />
                    <path d="M2 4h2.500M5.500 4H8M9 4h2.500M2 6.500h2.500M5.500 6.500H8M9 6.500h2.500M2 9h2.500M5.500 9H8M9 9h2.500" stroke="#9dc4f0" />
                </Icon>
            </button>
            <button aria-label="Exploded views" className={SIDE_BTN}>
                <Icon>
                    <path d="M1 3l2-2h6v6L7.500 8.500H3L1 7z" fill="#ccc" stroke="#666" />
                    <path d="M5 11h9v2" stroke="#1651b0" strokeWidth="1.800" strokeDasharray="3 1" />
                    <path d="M9 17h6.500v-6l3-2H23v14H13l-4-3.500zM9 17l4 2.500h5.500V12L23 9M13 19.500V23M15.500 11l3 1" />
                </Icon>
            </button>
        </div>
        <div className="absolute bottom-1.5 right-3 flex gap-[19px]">
            <button aria-label="Measure">
                <Icon>
                    <path d="M22 10v8c-1 2-3 3-5 3H1v-6h10c-3-1-3-9 5-9 4 0 6 2 6 4s-2 4-6 4-6-2-6-4M2 18v3M5 19v2M8 18v3M11 19v2M14 18v3" />
                    <ellipse cx="16" cy="9.500" rx="3" ry="1.500" />
                </Icon>
            </button>
            <button aria-label="Mass properties">
                <Icon>
                    <path d="M5 4h14M12 4v15M5 4l-3 10h6zM19 4l-3 10h6z" />
                    <path d="M2 14h6M16 14h6" strokeWidth="2" />
                    <path d="M3 21h18" strokeWidth="3" />
                </Icon>
            </button>
        </div>
    </main>
);

/* ---------- bottom tabs ---------- */

const TAB = 'flex h-[33px] w-[243px] items-center gap-1.5 rounded-b-md bg-[#e8e8e8] pl-3.5 text-[#666] shadow-[0_1px_2px_#999]';

const TabBar = () => (
    <div className="flex h-9 shrink-0 gap-[3px] bg-[#cfcfcf] text-base">
        <button aria-label="Add tab" className="flex w-11 items-center justify-center pr-1 text-[#555]">
            <Icon className="h-[18px] w-[18px]" box="0 0 18 18">
                <path d="M9 0v18M0 9h18" strokeWidth="3" />
            </Icon>
        </button>
        {['Body', 'RealParts', 'Suspension'].map((tab) => (
            <button key={tab} className={TAB}>
                <Icon className="h-[22px] w-[21px] text-[#333]"><StudioGlyph /></Icon>
                {tab}
            </button>
        ))}
        <button className="flex h-[35px] w-[243px] items-center gap-1.5 rounded-b-md border-b-3 border-[#1651b0] bg-white pl-3 pt-px text-[#333]">
            <Icon className="h-[22px] w-[22px]"><AssemblyGlyph /></Icon>
            Assembly 1
        </button>
    </div>
);

const App = () => {
    return (
        <div className="flex h-screen flex-col overflow-hidden bg-white font-['Noto_Sans',sans-serif]">
            <Header />
            <div className="flex min-h-0 flex-1">
                <Rail />
                <div className="flex min-w-0 flex-1 flex-col">
                    <Toolbar />
                    <div className="flex min-h-0 flex-1">
                        <FeatureTree />
                        <Viewport />
                    </div>
                    <TabBar />
                </div>
            </div>
        </div>
    );
};

export default App;
